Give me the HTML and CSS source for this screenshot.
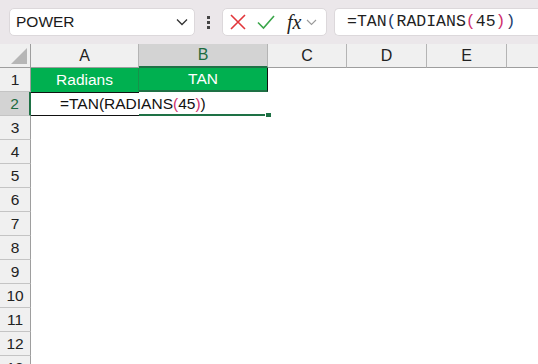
FILE: index.html
```html
<!DOCTYPE html>
<html lang="en">
<head>
  <meta charset="UTF-8" />
  <title>TAN formula</title>
  <link rel="stylesheet" href="styles.css">
</head>
<body>
  <div class="topbar">
    <div class="namebox">
      <span>POWER</span>
      <svg class="chev" width="12" height="8" viewBox="0 0 12 8"><path d="M1 1.5 L6 6.5 L11 1.5" fill="none" stroke="#333" stroke-width="1.3"/></svg>
    </div>
    <div class="grip"><i></i><i></i><i></i></div>
    <div class="fbtns">
      <svg width="18" height="16" viewBox="0 0 18 16"><path d="M2 1 L16 15 M16 1 L2 15" stroke="#e2363b" stroke-width="1.6" fill="none"/></svg>
      <svg width="18" height="16" viewBox="0 0 18 16"><path d="M1 8.5 L6.5 14 L17 2" stroke="#3aa64a" stroke-width="1.6" fill="none"/></svg>
      <span class="fx">fx</span>
      <svg width="11" height="7" viewBox="0 0 11 7"><path d="M1 1 L5.5 5.5 L10 1" fill="none" stroke="#9a9a9a" stroke-width="1.1"/></svg>
    </div>
    <div class="formula">=TAN<span class="p1">(</span>RADIANS<span class="p2">(</span>45<span class="p2">)</span><span class="p1">)</span></div>
  </div>

  <div class="sheet">
    <div class="hd corner"><i></i></div>
    <div class="hd col">A</div>
    <div class="hd col sel">B</div>
    <div class="hd col">C</div>
    <div class="hd col">D</div>
    <div class="hd col">E</div>
    <div class="hd col last"></div>

    <div class="hd row">1</div>
    <div class="cell head a1">Radians</div>
    <div class="cell head b1">TAN</div>
    <div class="cell fill"></div>

    <div class="hd row sel">2</div>
    <div class="cell a2"></div>
    <div class="cell b2"><i class="handle"></i></div>
    <div class="cell fill"></div>
    <div class="edit">=TAN(RADIANS<span class="p2">(</span>45<span class="p2">)</span>)</div>

    <div class="hd row">3</div><div class="cell fill all"></div>
    <div class="hd row">4</div><div class="cell fill all"></div>
    <div class="hd row">5</div><div class="cell fill all"></div>
    <div class="hd row">6</div><div class="cell fill all"></div>
    <div class="hd row">7</div><div class="cell fill all"></div>
    <div class="hd row">8</div><div class="cell fill all"></div>
    <div class="hd row">9</div><div class="cell fill all"></div>
    <div class="hd row">10</div><div class="cell fill all"></div>
    <div class="hd row">11</div><div class="cell fill all"></div>
    <div class="hd row">12</div><div class="cell fill all"></div>
    <div class="hd row">13</div><div class="cell fill all"></div>
  </div>
</body>
</html>
```

FILE: styles.css
```css
body {
  margin: 0;
  width: 538px;
  height: 364px;
  overflow: hidden;
  background: #fff;
  font-family: "Liberation Sans", Arial, sans-serif;
  color: #1a1a1a;
}

/* formula bar */
.topbar {
  height: 44px;
  background: #ebe7ea;
  display: flex;
  align-items: flex-start;
  padding: 8px 0 0 9px;
  box-sizing: border-box;
}
.namebox {
  width: 186px;
  height: 28px;
  box-sizing: border-box;
  background: #fff;
  border: 1px solid #dcd8db;
  border-radius: 5px;
  display: flex;
  align-items: center;
  justify-content: space-between;
  padding: 0 6px 0 6px;
  font-size: 15.5px;
}
.grip {
  width: 27px;
  height: 28px;
  display: flex;
  flex-direction: column;
  align-items: center;
  justify-content: center;
  gap: 2px;
}
.grip i {
  width: 3px;
  height: 3px;
  background: #444;
}
.fbtns {
  width: 105px;
  height: 28px;
  box-sizing: border-box;
  background: #fff;
  border: 1px solid #dcd8db;
  border-radius: 5px;
  display: flex;
  align-items: center;
  padding-left: 6px;
  gap: 10px;
}
.fx {
  font-family: "Liberation Serif", "Times New Roman", serif;
  font-style: italic;
  font-size: 20px;
  color: #222;
  margin-left: 2px;
  margin-right: -5px;
}
.formula {
  flex: 1;
  margin-left: 7px;
  height: 28px;
  box-sizing: border-box;
  background: #fff;
  border: 1px solid #dcd8db;
  border-right: 0;
  border-radius: 5px 0 0 5px;
  padding-left: 12px;
  font-family: "Liberation Mono", "DejaVu Sans Mono", monospace;
  font-size: 16.5px;
  line-height: 26px;
  color: #1f1f1f;
}
.p1 { color: #24406f; }
.p2 { color: #cf2f6c; }

/* grid */
.sheet {
  display: grid;
  grid-template-columns: 31px 108px 129px 79px 80px 80px 1fr;
  grid-auto-rows: 24px;
  font-size: 15.5px;
}
.hd {
  background: #f0f0f0;
  box-sizing: border-box;
  display: flex;
  align-items: center;
  justify-content: center;
  color: #222;
}
.col {
  font-size: 16px;
  border-right: 1px solid #b4b4b4;
  border-bottom: 1px solid #9e9e9e;
}
.col.last { border-right: 0; }
.row {
  border-right: 1px solid #9e9e9e;
  border-bottom: 1px solid #c4c4c4;
}
.corner {
  border-right: 1px solid #9e9e9e;
  border-bottom: 1px solid #9e9e9e;
  justify-content: flex-end;
  align-items: flex-end;
  padding: 0 3px 3px 0;
}
.corner i {
  width: 16px;
  height: 16px;
  background: #b6b6b6;
  clip-path: polygon(100% 0, 100% 100%, 0 100%);
}
.col.sel {
  background: #d3d3d3;
  color: #1d6b40;
  border-bottom: 2px solid #1e7145;
}
.row.sel {
  background: #d3d3d3;
  color: #1d6b40;
  border-right: 2px solid #1e7145;
}

.cell {
  box-sizing: border-box;
  display: flex;
  align-items: center;
  justify-content: center;
}
.fill { grid-column: 4 / 8; }
.fill.all { grid-column: 2 / 8; }
.head {
  background: #00b050;
  color: #fff;
}
.a1 { border-right: 1px solid #17924a; }
.b1 {
  border-right: 1px solid #111;
  border-bottom: 2px solid #1e7145;
}
.a2 {
  grid-row: 3;
  grid-column: 2;
  border-top: 1px solid #111;
  border-bottom: 1px solid #111;
}
.b2 {
  grid-row: 3;
  grid-column: 3;
  position: relative;
  border-bottom: 2px solid #1e7145;
}
.handle {
  position: absolute;
  right: -3px;
  bottom: -3px;
  width: 5px;
  height: 4px;
  background: #1e7145;
  border-left: 1px solid #fff;
}
.edit {
  grid-row: 3;
  grid-column: 2 / 4;
  padding-left: 29px;
  line-height: 24px;
  color: #111;
  z-index: 1;
}
```
